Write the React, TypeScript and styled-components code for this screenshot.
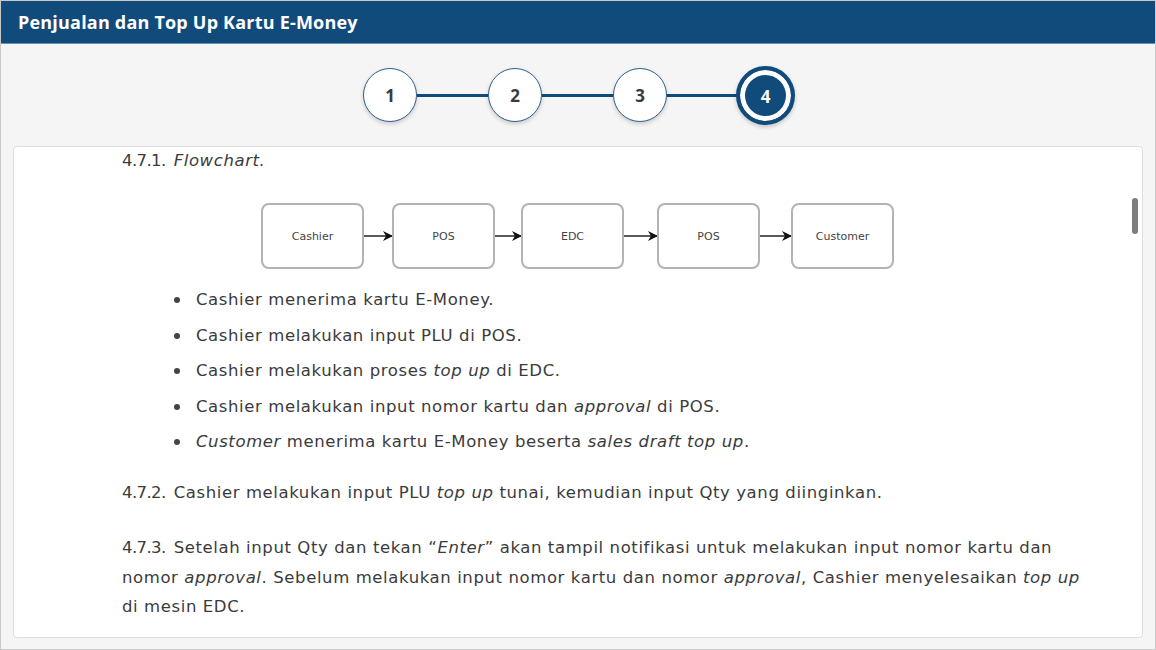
import styled, { createGlobalStyle } from "styled-components";

const Global = createGlobalStyle`
  html, body {
    margin: 0;
    padding: 0;
    background: #f5f5f5;
  }
  * {
    box-sizing: border-box;
  }
`;

const Frame = styled.div`
  width: 1156px;
  height: 650px;
  border: 1px solid #c9c9c9;
  background: #f5f5f5;
  display: flex;
  flex-direction: column;
  overflow: hidden;
`;

const Header = styled.div`
  height: 43px;
  background: #114b7c;
  border-bottom: 1px solid #6d8fae;
  color: #fff;
  font-family: "Open Sans", sans-serif;
  font-weight: 700;
  font-size: 18px;
  letter-spacing: 0.2px;
  display: flex;
  align-items: center;
  padding-left: 17px;
`;

const Stepper = styled.div`
  height: 102px;
  display: flex;
  align-items: center;
  justify-content: center;
  padding-left: 2px;
`;

const Step = styled.div<{ $active?: boolean }>`
  width: ${(p) => (p.$active ? 59 : 54)}px;
  height: ${(p) => (p.$active ? 59 : 54)}px;
  margin-left: ${(p) => (p.$active ? -2 : 0)}px;
  padding-top: ${(p) => (p.$active ? 2 : 0)}px;
  border-radius: 50%;
  display: flex;
  align-items: center;
  justify-content: center;
  font-family: "Open Sans", sans-serif;
  font-weight: 700;
  font-size: 17px;
  flex-shrink: 0;
  position: relative;
  color: ${(p) => (p.$active ? "#fff" : "#3a3a3a")};
  background: ${(p) => (p.$active ? "#114b7c" : "#fff")};
  border: ${(p) => (p.$active ? "4px solid #114b7c" : "1.5px solid #2d5f8e")};
  box-shadow: ${(p) =>
    p.$active
      ? "inset 0 0 0 5px #fff, 0 2px 4px rgba(0,0,0,0.2)"
      : "0 2px 4px rgba(0,0,0,0.18)"};
`;

const Connector = styled.div`
  width: 71px;
  height: 3px;
  background: #114b7c;
  flex-shrink: 0;
`;

const Card = styled.div`
  position: relative;
  margin: 0 12px 11px 12px;
  flex: 1;
  background: #fff;
  border: 1px solid #dedede;
  border-radius: 4px;
  overflow: hidden;
`;

const Content = styled.div`
  padding: 0 108px;
  font-family: "DejaVu Sans", sans-serif;
  font-size: 16.5px;
  letter-spacing: 0.6px;
  color: #3b3b3b;
`;

const Heading = styled.p`
  margin: 0;
  line-height: 28px;
`;

const Chart = styled.div`
  display: flex;
  justify-content: center;
  margin-top: 24px;
  letter-spacing: 0;
`;

const List = styled.ul`
  list-style: none;
  margin: 9px 0 0 0;
  padding: 0 0 0 74px;
`;

const Item = styled.li`
  position: relative;
  line-height: 35.5px;
  &::before {
    content: "";
    position: absolute;
    left: -22px;
    top: 15px;
    width: 6px;
    height: 6px;
    border-radius: 50%;
    background: #444;
  }
`;

const Para = styled.p<{ $gap: number }>`
  margin: ${(p) => p.$gap}px 0 0 0;
  line-height: 29.5px;
  white-space: nowrap;
`;

const Num = styled.span`
  letter-spacing: -0.6px;
  margin-right: 8px;
`;

const Thumb = styled.div`
  position: absolute;
  right: 4px;
  top: 51px;
  width: 6px;
  height: 36px;
  border-radius: 3px;
  background: #7d7d7d;
`;

const boxes = [
  { x: 4, label: "Cashier" },
  { x: 135, label: "POS" },
  { x: 264, label: "EDC" },
  { x: 400, label: "POS" },
  { x: 534, label: "Customer" },
];

const Flowchart = () => (
  <svg width="640" height="74" viewBox="0 0 640 74">
    <defs>
      <marker id="arr" markerWidth="10" markerHeight="10" refX="9" refY="5" orient="auto" markerUnits="userSpaceOnUse">
        <path d="M0,0 L10,5 L0,10 L3,5 Z" fill="#111" />
      </marker>
    </defs>
    {boxes.map((b, i) => (
      <g key={i}>
        <rect x={b.x} y={5} width={101} height={64} rx={7} fill="#fff" stroke="#b3b3b3" strokeWidth={2} />
        <text
          x={b.x + 50.5}
          y={41}
          textAnchor="middle"
          fontFamily="'DejaVu Sans', sans-serif"
          fontSize="11"
          fill="#444"
        >
          {b.label}
        </text>
        {i < boxes.length - 1 && (
          <line
            x1={b.x + 102}
            y1={37}
            x2={boxes[i + 1].x - 1}
            y2={37}
            stroke="#222"
            strokeWidth={1.5}
            markerEnd="url(#arr)"
          />
        )}
      </g>
    ))}
  </svg>
);

const App = () => {
  return (
    <Frame>
      <Global />
      <Header>Penjualan dan Top Up Kartu E-Money</Header>
      <Stepper>
        <Step>1</Step>
        <Connector />
        <Step>2</Step>
        <Connector />
        <Step>3</Step>
        <Connector />
        <Step $active>4</Step>
      </Stepper>
      <Card>
        <Content>
          <Heading>
            <Num>4.7.1.</Num>
            <em>Flowchart.</em>
          </Heading>
          <Chart>
            <Flowchart />
          </Chart>
          <List>
            <Item>Cashier menerima kartu E-Money.</Item>
            <Item>Cashier melakukan input PLU di POS.</Item>
            <Item>
              Cashier melakukan proses <em>top up</em> di EDC.
            </Item>
            <Item>
              Cashier melakukan input nomor kartu dan <em>approval</em> di POS.
            </Item>
            <Item>
              <em>Customer</em> menerima kartu E-Money beserta <em>sales draft top up</em>.
            </Item>
          </List>
          <Para $gap={18}>
            <Num>4.7.2.</Num>Cashier melakukan input PLU <em>top up</em> tunai, kemudian input Qty yang
            diinginkan.
          </Para>
          <Para $gap={26}>
            <Num>4.7.3.</Num>Setelah input Qty dan tekan “<em>Enter</em>” akan tampil notifikasi untuk
            melakukan input nomor kartu dan
            <br />
            nomor <em>approval</em>. Sebelum melakukan input nomor kartu dan nomor <em>approval</em>,
            Cashier menyelesaikan <em>top up</em>
            <br />
            di mesin EDC.
          </Para>
        </Content>
        <Thumb />
      </Card>
    </Frame>
  );
};

export default App;
